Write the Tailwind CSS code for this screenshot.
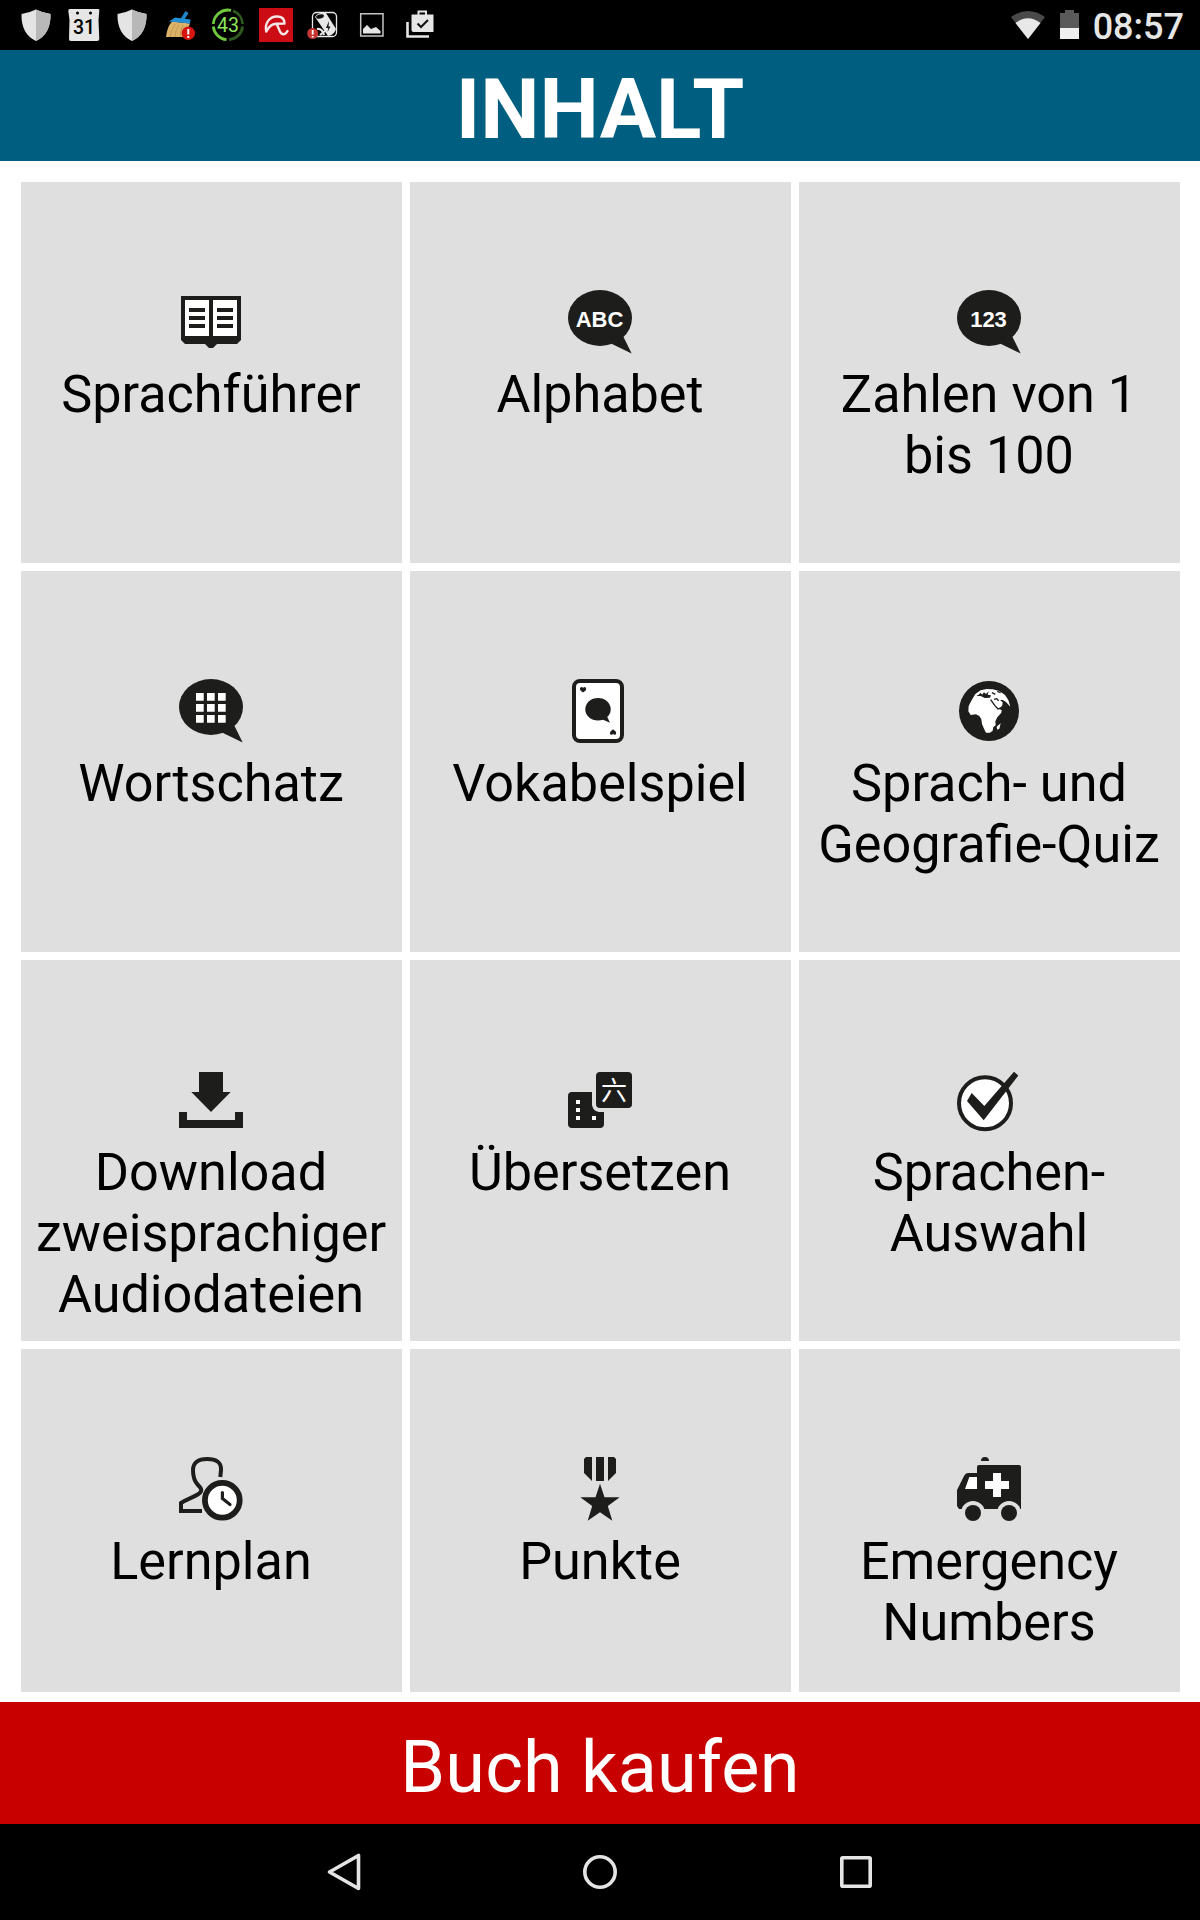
<!DOCTYPE html>
<html lang="de">
<head>
    <meta charset="UTF-8">
    <meta name="viewport" content="width=device-width, initial-scale=1.0">
    <title>Inhalt</title>
    <script src="https://cdn.jsdelivr.net/npm/@tailwindcss/browser@4"></script>
</head>
<body class="bg-white h-[1920px] flex flex-col overflow-hidden font-['Roboto',sans-serif] text-black">

    <!-- status bar -->
    <div class="h-[50px] shrink-0 bg-black flex items-center justify-between pl-3 pr-4">
        <div class="flex">
            <svg class="w-12 h-[50px]" viewBox="0 0 48 50">
                <path fill="#e4e4e4" d="M24 9.500Q31 13 38.500 14Q39 34 24 41Q9 34 9.500 14Q17 13 24 9.500Z"/>
                <path fill="#b8b8b8" d="M24 9.500Q31 13 38.500 14Q39 34 24 41Z"/>
            </svg>
            <svg class="w-12 h-[50px]" viewBox="0 0 48 50">
                <path fill="#e6e6e6" d="M10 9H38Q40 9 39.300 11L38.500 20L39.300 39Q39.300 41 37 41H11Q8.700 41 9 39L9.500 20L8.300 11Q8 9 10 9Z"/>
                <circle cx="17.500" cy="13" r="1.500"/><circle cx="30.500" cy="13" r="1.500"/>
                <text x="24" y="34.300" text-anchor="middle" font-size="19.500" font-weight="500">31</text>
            </svg>
            <svg class="w-12 h-[50px]" viewBox="0 0 48 50">
                <path fill="#e4e4e4" d="M24 9.500Q31 13 38.500 14Q39 34 24 41Q9 34 9.500 14Q17 13 24 9.500Z"/>
                <path fill="#b8b8b8" d="M24 9.500Q31 13 38.500 14Q39 34 24 41Z"/>
            </svg>
            <svg class="w-12 h-[50px]" viewBox="0 0 48 50">
                <path stroke="#1f86c9" stroke-width="3.500" d="M31 12L26 20"/>
                <path fill="#dcb368" d="M16 21.500L34 23.500Q31 31 31 37H10Q11 27 16 21.500Z"/>
                <path stroke="#bd9148" stroke-width=".8" fill="none" d="M19 24Q15 30 14 37M23 25Q19 30 19 37M27 25Q24 30 24 37"/>
                <path fill="#2390d6" d="M19 17.500L34.500 19.500L34 23.500L13 21.500Z"/>
                <circle cx="32.300" cy="33.300" r="6.700" fill="#d51510"/>
                <path stroke="#fff" stroke-width="2" d="M32.300 29V34.500M32.300 36V38"/>
            </svg>
            <svg class="w-12 h-[50px]" viewBox="0 0 48 50">
                <path fill="none" stroke="#6fc93c" stroke-width="2.800" d="M27 10.300A14.800 14.800 0 0 0 9.300 24M9.300 26.500A14.800 14.800 0 0 0 22.500 39.700"/>
                <path fill="none" stroke="#2f5a1e" stroke-width="2.800" d="M29 10.800A14.800 14.800 0 0 1 38.600 24M38.600 26.500A14.800 14.800 0 0 1 25 39.700"/>
                <text x="24" y="32" text-anchor="middle" font-size="19.500" fill="#8ee65c">43</text>
            </svg>
            <svg class="w-12 h-[50px]" viewBox="0 0 48 50">
                <path fill="#cb0c14" d="M7 8H41V42H7Z"/>
                <path fill="none" stroke="#f3e6e6" stroke-width="2.400" stroke-linecap="round" stroke-linejoin="round" d="M14.300 31.500C12.500 24 17 16.500 25 16.500C30 16.500 32.500 19 32.500 23.500L24.700 23.800C20 23.500 17 26.500 14.300 31.500M24.700 24L28 31.500C29.500 35 33 35.500 35.500 31"/>
            </svg>
            <svg class="w-12 h-[50px]" viewBox="0 0 48 50">
                <rect x="12.500" y="12.500" width="24" height="24" rx="4" fill="#000" stroke="#e8e8e8" stroke-width="1.300"/>
                <path fill="#e8e8e8" d="M15 17Q18 12 26 13L36 29Q34 35 28 36Z"/>
                <ellipse cx="20" cy="16.500" rx="4" ry="2" fill="#111" transform="rotate(-15 20 16.500)"/>
                <path fill="#111" d="M29 21L26 28H28.300L27.500 32L30.500 26.500H28.500Z"/>
                <path stroke="#e8e8e8" stroke-width="2" fill="none" d="M17 29Q22 28 24 35M20 35L25 31"/>
                <circle cx="12.700" cy="33.500" r="5.500" fill="#c83636"/>
                <path stroke="#fff" stroke-width="1.800" d="M12.700 30V34.500M12.700 36V37.500"/>
            </svg>
            <svg class="w-12 h-[50px]" viewBox="0 0 48 50">
                <path fill="none" stroke="#c4c4c4" stroke-width="1.500" d="M12.700 13.700H35V36H12.700Z"/>
                <path fill="#e6e6e6" d="M15 33.500V29L19 25L23 29L28 27L32.500 31V33.500Z"/>
            </svg>
            <svg class="w-12 h-[50px]" viewBox="0 0 48 50">
                <path fill="none" stroke="#e6e6e6" stroke-width="2.600" d="M11.500 22V36.500H33"/>
                <path fill="#e6e6e6" d="M16 14.500H37.500V32H17.500Q15.500 32 15.500 30V15Z"/>
                <path fill="none" stroke="#e6e6e6" stroke-width="2" d="M22.500 15V11.500H30V15"/>
                <path fill="none" stroke="#111" stroke-width="2" d="M21.500 23.500L25 27L32 20"/>
            </svg>
        </div>
        <div class="flex items-center">
            <svg class="w-[34px] h-[50px] mr-[15px]" viewBox="0 0 34 50">
                <path fill="#4a4a4a" d="M17 39L0 17Q17 5 34 17Z"/>
                <path fill="#e8e8e8" d="M17 39L4.500 23Q17 13.500 29.500 23Z"/>
            </svg>
            <svg class="w-[19px] h-[50px] mr-3.5" viewBox="0 0 19 50">
                <path fill="#5a5a5a" d="M0 13H5V10H14V13H19V28H0Z"/>
                <path fill="#efefef" d="M0 28H19V39H0Z"/>
            </svg>
            <span class="text-[36px] leading-[50px] font-medium text-[#e6e6e6] relative top-0.5">08:57</span>
        </div>
    </div>

    <h1 class="h-[111px] shrink-0 bg-[#005f80] text-white text-[84px] leading-[119px] font-bold text-center">INHALT</h1>

    <!-- tiles, the last row is cut off above the button -->
    <main class="h-[1510px] shrink-0 overflow-hidden mt-[21px] mb-2.5 pl-[21px] grid grid-cols-[repeat(3,381px)] auto-rows-[381px] gap-2 text-[52.2px] leading-[61px] text-center [&>div]:bg-[#dfdfdf] [&>div]:pt-[108px] [&>div]:flex [&>div]:flex-col [&>div]:items-center [&_svg]:size-16 [&_svg]:shrink-0 [&_svg]:mr-px [&_svg]:mb-2.5 [&_p]:mr-px">
        <div>
            <svg viewBox="0 0 64 64" fill="#1d1d1b">
                <path d="M2 6H62V50L58 54H38L34 58H30L26 54H6L2 50Z"/>
                <path fill="#fff" d="M6 10H30V46H6ZM34 10H58V46H34Z"/>
                <path d="M10 18h16v4h-16zM10 26h16v4h-16zM10 34h16v4h-16zM38 18h16v4h-16zM38 26h16v4h-16zM38 34h16v4h-16z"/>
            </svg>
            <p>Sprachführer</p>
        </div>
        <div>
            <svg viewBox="0 0 64 64" fill="#1d1d1b">
                <ellipse cx="32" cy="28" rx="32" ry="28"/>
                <path d="M44 54L63.700 63.500L55.500 47L46 44Z"/>
                <text class="font-['Liberation_Sans',sans-serif]" x="31.500" y="37" text-anchor="middle" font-size="22" font-weight="700" fill="#fff">ABC</text>
            </svg>
            <p>Alphabet</p>
        </div>
        <div>
            <svg viewBox="0 0 64 64" fill="#1d1d1b">
                <ellipse cx="32" cy="28" rx="32" ry="28"/>
                <path d="M44 54L63.700 63.500L55.500 47L46 44Z"/>
                <text class="font-['Liberation_Sans',sans-serif]" x="31.500" y="37" text-anchor="middle" font-size="22" font-weight="700" fill="#fff">123</text>
            </svg>
            <p>Zahlen von 1<br>bis 100</p>
        </div>

        <div>
            <svg viewBox="0 0 64 64" fill="#1d1d1b">
                <ellipse cx="32" cy="28" rx="32" ry="28"/>
                <path d="M44 54L63.700 63.500L55.500 47L46 44Z"/>
                <path fill="#fff" d="M17 14h7.700v7.700h-7.700zM28 14h7.700v7.700h-7.700zM39 14h7.700v7.700h-7.700zM17 25h7.700v7.700h-7.700zM28 25h7.700v7.700h-7.700zM39 25h7.700v7.700h-7.700zM17 36h7.700v7.700h-7.700zM28 36h7.700v7.700h-7.700zM39 36h7.700v7.700h-7.700z"/>
            </svg>
            <p>Wortschatz</p>
        </div>
        <div>
            <svg viewBox="0 0 64 64" fill="#1d1d1b">
                <rect x="6" y="2" width="48" height="60" rx="6" fill="#fff" stroke="#1d1d1b" stroke-width="4"/>
                <ellipse cx="30" cy="30.300" rx="12.700" ry="11.300"/>
                <path d="M34.500 40.500L42 43.800L39.300 38L36 37Z"/>
                <path d="M15 13.600L12.500 11.500Q11 8.500 13.500 8Q14.700 8 15 9Q15.500 8 16.700 8Q19 8.500 17.700 11.500Z"/>
                <path d="M45 50.200L42.500 52.500Q41 55.300 43.500 55.800Q44.700 55.800 45 54.800Q45.500 55.800 46.700 55.800Q49 55.300 47.700 52.500Z"/>
            </svg>
            <p>Vokabelspiel</p>
        </div>
        <div>
            <svg viewBox="0 0 64 64" fill="#1d1d1b">
                <circle cx="32" cy="32" r="30"/>
                <g transform="scale(.33333) translate(-51 -57)">
                    <path fill="#fff" d="M106 102L122 91L140 87L158 88L178 93L195 105L205 120L211 140L198 126L188 120L180 120L188 127L187 136L178 148L185 150L184 158L172 172L166 184L167 196L160 201L158 212L150 218L138 218L132 206L126 192L124 178L118 168L108 163L92 165L85 154L86 138L94 122Z"/>
                    <path fill="#fff" d="M182 190L178 206L172 209L170 200Z"/>
                    <path d="M109 108L116 104L122 98L126 104L132 97L138 102L146 94L143 104L153 106L150 113L134 114L122 108Z"/>
                    <path fill="none" stroke="#1d1d1b" stroke-width="4" d="M152 119L164 136L174 147L186 142M162 118L170 116L176 122M156 98L166 103M172 94L182 98"/>
                </g>
            </svg>
            <p>Sprach- und<br>Geografie-Quiz</p>
        </div>

        <div>
            <svg viewBox="0 0 64 64" fill="#1d1d1b">
                <path d="M20 4H44V24H51.700L32 44L12.300 24H20ZM0 44H8V52H56V44H64V60H0Z"/>
            </svg>
            <p>Download<br>zweisprachiger<br>Audiodateien</p>
        </div>
        <div>
            <svg viewBox="0 0 64 64" fill="#1d1d1b">
                <rect x="28" y="4" width="36" height="36" rx="4"/>
                <path d="M4 24H24V37Q25 43 31 44H36V56Q36 60 32 60H4Q0 60 0 56V28Q0 24 4 24Z"/>
                <path fill="#fff" d="M8 32h4v4h-4zM8 40h4v4h-4zM8 48h4v4h-4zM24 48h4v4h-4z"/>
                <text class="font-['Noto_Sans_CJK_SC',sans-serif]" x="46" y="32" text-anchor="middle" font-size="26" fill="#fff">六</text>
            </svg>
            <p>Übersetzen</p>
        </div>
        <div>
            <svg viewBox="0 0 64 64" fill="#1d1d1b">
                <circle cx="28" cy="35.200" r="26" fill="#fff" stroke="#1d1d1b" stroke-width="4"/>
                <path d="M57 3.700L61.300 7.500L26.700 52.300L10 33L14.700 25L27.300 38Z"/>
            </svg>
            <p>Sprachen-<br>Auswahl</p>
        </div>

        <div>
            <svg viewBox="0 0 64 64" fill="none" stroke="#1d1d1b">
                <path stroke-width="4" d="M41.300 20L42 13C42.500 5 37 2 28 2C19 2 14 6 14 13C14 20 15.500 24.500 19 28C23 32 23.500 34 19.500 37C14 40.500 8 42 2 46V54H23"/>
                <circle cx="43.300" cy="43.300" r="17.400" fill="#fff" stroke-width="5.800"/>
                <path stroke-width="3.200" stroke-linecap="round" d="M43.400 35.500V41.500L51 47.500"/>
            </svg>
            <p>Lernplan</p>
        </div>
        <div>
            <svg viewBox="0 0 64 64" fill="#1d1d1b">
                <path d="M18 0H24V24L16 16V2ZM28 0H36V24H28ZM40 0H46L48 2V16L40 24Z"/>
                <path d="M32 26.700L36.500 40.300H51.700L39.800 49L44.300 63.700L32 55.300L19.700 63.700L24.200 49L12.300 40.300H27.500Z"/>
            </svg>
            <p>Punkte</p>
        </div>
        <div>
            <svg viewBox="0 0 64 64" fill="#1d1d1b">
                <path d="M24 4Q24 0 28 0Q32 0 32 4ZM22 8H62Q64 8 64 10V52H2L0 49V33L7 19Q8.500 16 11 16H20V10Q20 8 22 8Z"/>
                <path fill="#fff" d="M12.300 20H20V32H8ZM36 16H44V24H52V32H44V40H36V32H28V24H36Z"/>
                <circle cx="16" cy="56" r="12" fill="#dfdfdf"/><circle cx="52" cy="56" r="12" fill="#dfdfdf"/>
                <circle cx="16" cy="56" r="8"/><circle cx="52" cy="56" r="8"/>
            </svg>
            <p>Emergency<br>Numbers</p>
        </div>
    </main>

    <button class="h-[122px] shrink-0 bg-[#c80000] text-white text-[72px] leading-[112px] tracking-[0.2px] pt-2.5">Buch kaufen</button>

    <!-- navigation bar -->
    <div class="h-24 shrink-0 bg-black flex items-center justify-center gap-[208px]">
        <svg class="size-12" viewBox="0 0 48 48" fill="none" stroke="#e4e4e4" stroke-width="3.600" stroke-linejoin="round"><path d="M38.500 7.500V40.500L9.500 24Z"/></svg>
        <svg class="size-12" viewBox="0 0 48 48" fill="none" stroke="#e4e4e4" stroke-width="3.600"><circle cx="24" cy="24" r="15.200"/></svg>
        <svg class="size-12" viewBox="0 0 48 48" fill="none" stroke="#e4e4e4" stroke-width="3.600"><rect x="9.800" y="9.800" width="28.400" height="28.400" rx="1"/></svg>
    </div>
</body>
</html>
